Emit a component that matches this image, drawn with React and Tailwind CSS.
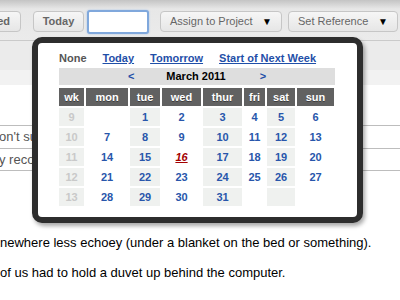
const COLS = ['wk', 'mon', 'tue', 'wed', 'thur', 'fri', 'sat', 'sun']

const WEEKS = [
  [9, null, 1, 2, 3, 4, 5, 6],
  [10, 7, 8, 9, 10, 11, 12, 13],
  [11, 14, 15, 16, 17, 18, 19, 20],
  [12, 21, 22, 23, 24, 25, 26, 27],
  [13, 28, 29, 30, 31, null, null, null],
]

function ToolButton({ children, className = '' }) {
  return (
    <div className={`flex h-[21px] items-center rounded-[4px] border border-[#c6c6c6] bg-[linear-gradient(#f6f6f6,#e6e6e6)] text-[11px] text-[#666] ${className}`}>
      {children}
    </div>
  )
}

function DatePopup() {
  return (
    <div className="absolute left-[32px] top-[37px] h-[186px] w-[331px] rounded-[10px] border-[6px] border-[#2d2d2d] bg-white shadow-[2px_3px_4px_rgba(0,0,0,0.35)]">
      <div className="pl-[21px] pt-[9px]">
        {/* quick picks */}
        <div className="flex h-[13px] items-center gap-4 text-[11px] font-bold leading-[13px]">
          <span className="text-[#555]">None</span>
          <span className="text-[#1f4fa8] underline">Today</span>
          <span className="text-[#1f4fa8] underline">Tomorrow</span>
          <span className="text-[#1f4fa8] underline">Start of Next Week</span>
        </div>

        {/* month nav */}
        <div className="mt-[3px] flex h-[17px] w-[276px] items-center justify-center bg-[#dedede] text-[11px] font-bold">
          <span className="mr-[32px] text-[#1f4fa8]">&lt;</span>
          <span className="text-black">March 2011</span>
          <span className="ml-[34px] text-[#1f4fa8]">&gt;</span>
        </div>

        {/* grid */}
        <div className="mt-[3px] grid w-[276px] grid-cols-[25px_42px_30px_39px_39px_21px_28px_37px] gap-[2px] text-[11px] font-bold">
          {COLS.map((c) => (
            <div key={c} className="flex h-[18px] items-center justify-center bg-[#616161] text-white [text-shadow:0_1px_0_rgba(0,0,0,0.4)]">
              {c}
            </div>
          ))}
          {WEEKS.map((row, r) =>
            row.map((d, i) => {
              const shaded = i % 2 === 0
              const today = d === 16 && i === 3
              return (
                <div
                  key={`${r}-${i}`}
                  className={`flex h-[18px] items-center justify-center ${shaded ? 'bg-[#eff1ef]' : ''} ${i === 0 ? 'text-[#c9c9c9]' : today ? 'italic text-[#a40000] underline' : 'text-[#2856ab]'}`}
                >
                  {d}
                </div>
              )
            })
          )}
        </div>
      </div>
    </div>
  )
}

export default function App() {
  return (
    <div className="relative h-[300px] w-[400px] overflow-hidden bg-white font-['Liberation_Sans',Arial,sans-serif]">
      {/* toolbar */}
      <div className="flex h-[41px] items-start border-b border-[#cacaca] bg-[linear-gradient(#c4c4c4,#e7e7e7_9px,#ebebeb)] pt-[11px]">
        <ToolButton className="ml-[-40px] w-[61px] justify-end pr-[10px] font-bold text-[#555]">ed</ToolButton>
        <ToolButton className="ml-[12px] w-[51px] justify-center font-bold text-[#555]">Today</ToolButton>
        <div className="ml-[3px] mt-[-1px] h-[24px] w-[62px] rounded-[3px] border-2 border-[#80a8dc] bg-white shadow-[0_0_2px_#9dbde6]" />
        <ToolButton className="ml-[11px] w-[122px] justify-between pl-[9px] pr-[9px]">
          <span>Assign to Project</span>
          <span className="text-[10px] text-black">▼</span>
        </ToolButton>
        <ToolButton className="ml-[6px] w-[110px] justify-between pl-[9px] pr-[9px]">
          <span>Set Reference</span>
          <span className="text-[10px] text-black">▼</span>
        </ToolButton>
      </div>

      <div className="h-[29px] bg-[#ebebeb]" />
      <div className="h-[15px] bg-[#f2f2f2]" />
      <div className="h-[40px]" />

      <div className="flex h-[23px] items-center border-t border-[#bdbdbd] text-[13px] text-[#555]">
        <span className="ml-[-1px]">on't support</span>
      </div>
      <div className="flex h-[23px] items-center border-y border-[#bdbdbd] text-[13px] text-[#555]">
        <span className="ml-[-1px]">y recording</span>
      </div>

      <p className="mt-[64px] text-[13px] leading-[16px] text-black">
        newhere less echoey (under a blanket on the bed or something).
      </p>
      <p className="mt-[14px] text-[13px] leading-[16px] text-black">
        of us had to hold a duvet up behind the computer.
      </p>

      <DatePopup />
    </div>
  )
}
